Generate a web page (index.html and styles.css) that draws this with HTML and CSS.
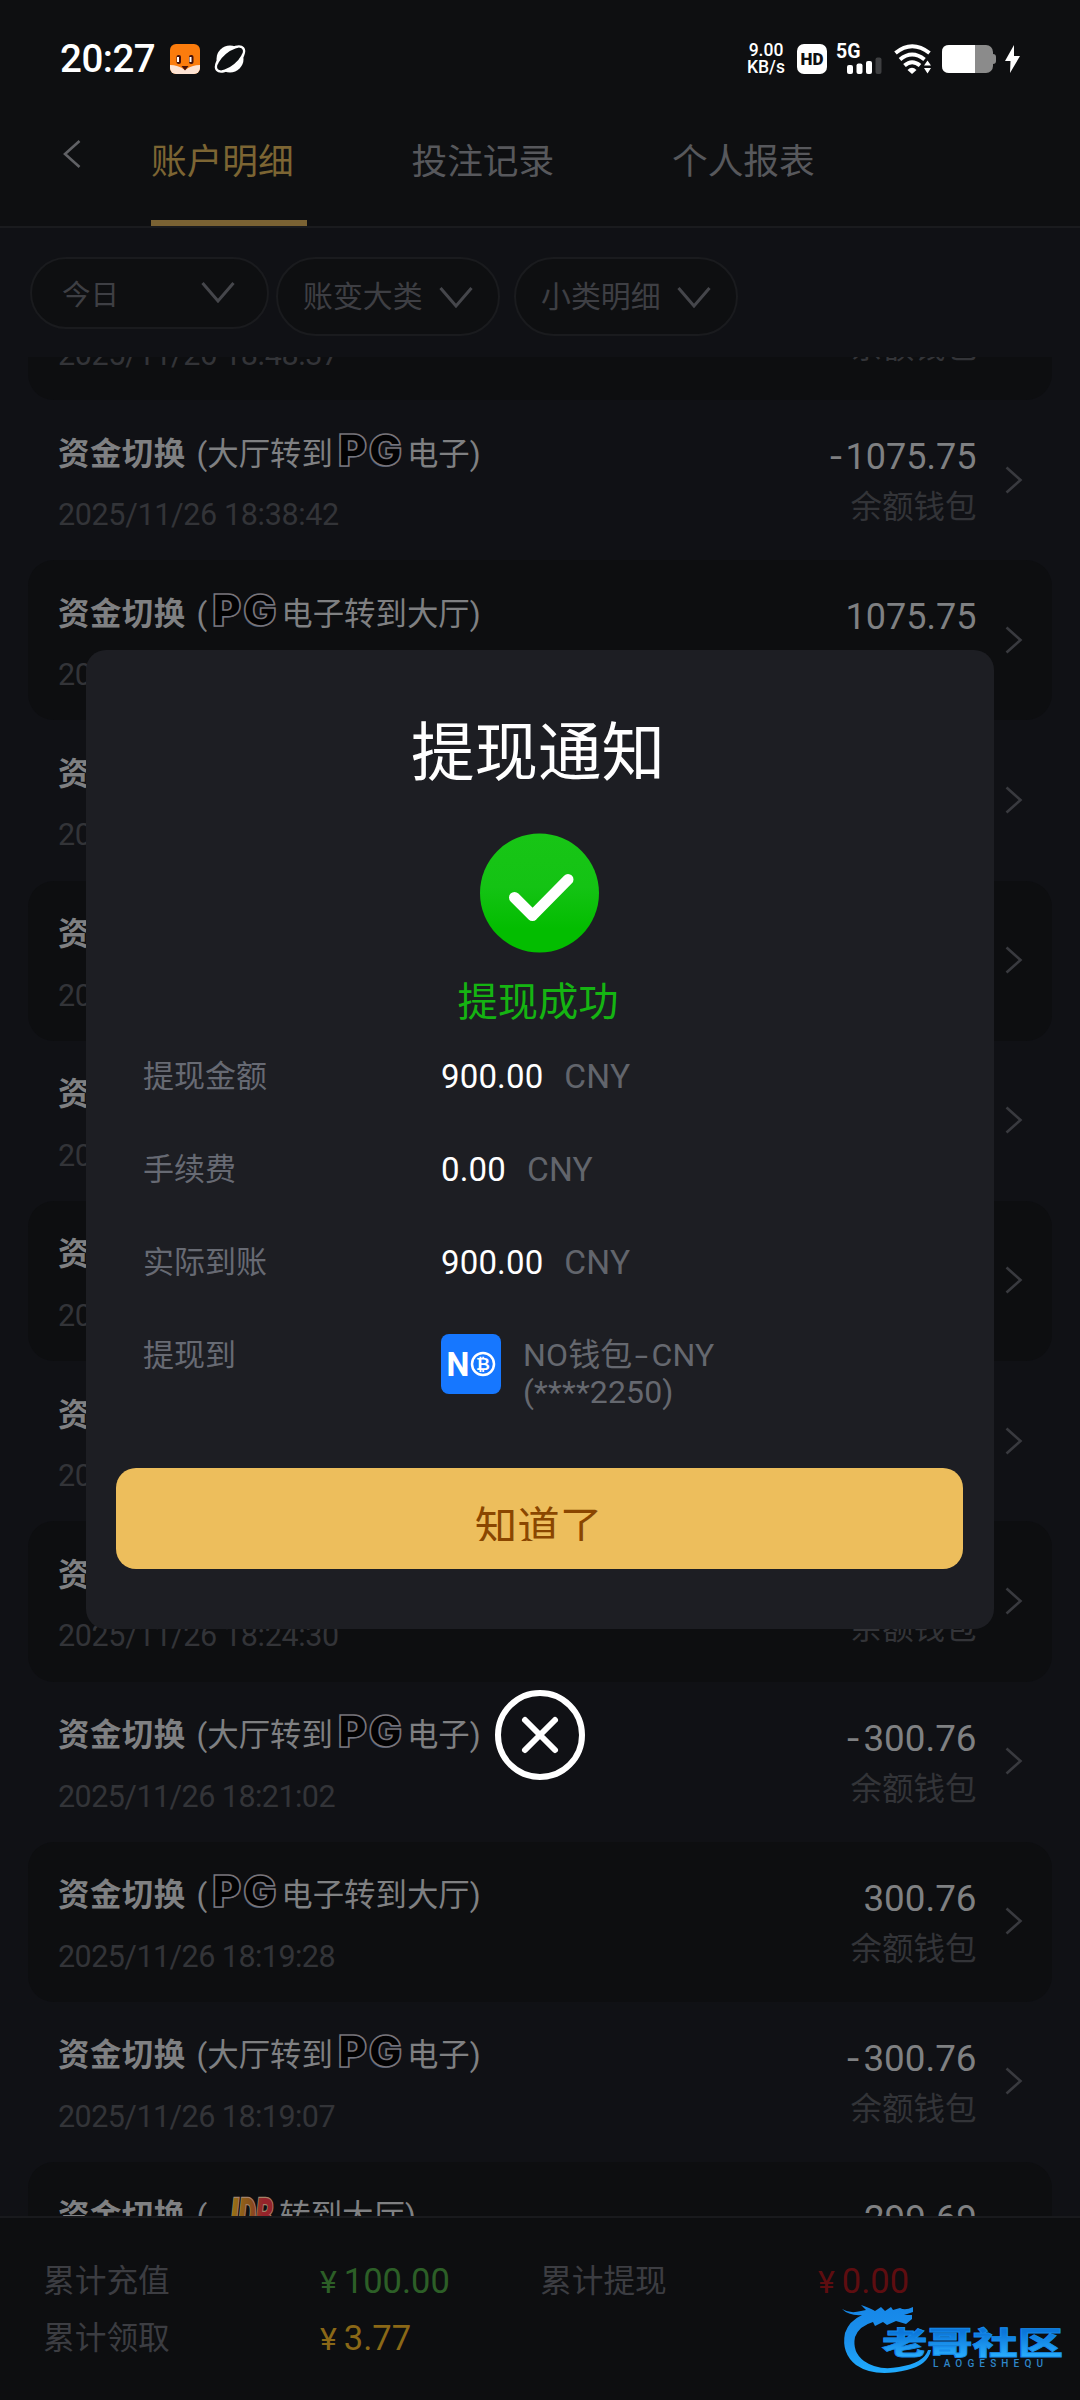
FILE: index.html
```html
<!DOCTYPE html>
<html lang="zh-CN">
<head>
<meta charset="utf-8">
<title>账户明细</title>
<link rel="stylesheet" href="styles.css">
</head>
<body>
<svg class="defs" width="0" height="0" aria-hidden="true">
  <symbol id="next" viewBox="0 0 18 28"><path d="M1.5 1.5 L15.5 14 L1.5 26.5"/></symbol>
  <symbol id="down" viewBox="0 0 34 22"><path d="M1.5 2 L17 20 L32.500 2"/></symbol>
</svg>
<div class="screen">
  <div class="status">
    <span class="clock">20:27</span>
    <svg class="fox" width="30" height="30" viewBox="0 0 30 30">
      <defs><clipPath id="foxclip"><rect width="30" height="30" rx="6"/></clipPath></defs>
      <g clip-path="url(#foxclip)">
        <rect width="30" height="30" fill="#fb7c0d"/>
        <path d="M0 21 Q8 21 15 26 Q22 21 30 21 V30 H0Z" fill="#fde3d3"/>
        <path d="M11.500 22 H18.500 L15 26.500Z" fill="#45120c"/>
        <rect x="6.500" y="11" width="4.500" height="9" rx="2" fill="#45120c"/><rect x="19" y="11" width="4.500" height="9" rx="2" fill="#45120c"/>
        <rect x="7" y="13" width="2" height="5" fill="#fff"/><rect x="19.500" y="13" width="2" height="5" fill="#fff"/>
      </g>
    </svg>
    <svg class="planet" width="32" height="30" viewBox="0 0 32 30">
      <circle cx="16" cy="15" r="13.500" fill="#fff"/>
      <ellipse cx="16" cy="15" rx="17" ry="8" transform="rotate(-40 16 15)" fill="none" stroke="#fff" stroke-width="2.500"/>
      <ellipse cx="16" cy="15" rx="15.500" ry="6.500" transform="rotate(-40 16 15)" fill="#0d0f11"/>
    </svg>
    <div class="status-right">
      <div class="speed"><span>9.00</span><span>KB/s</span></div>
      <div class="hd">HD</div>
      <div class="cell"><span class="g5">5G</span>
        <svg width="46" height="30" viewBox="0 0 46 30" fill="#fff"><rect x="10" y="21" width="6" height="9" rx="2"/><rect x="19.500" y="19.500" width="6" height="10.500" rx="2"/><rect x="29" y="17" width="6" height="13" rx="2"/><rect x="38.500" y="13.500" width="6" height="16.500" rx="2" fill="#3e3f41"/></svg>
      </div>
      <svg class="wifi" width="38" height="30" viewBox="0 0 38 30" fill="none" stroke="#fff" stroke-width="4">
        <path d="M1.500 9 Q18 -4.500 35.500 9"/><path d="M6 15.500 Q18 5.500 30.500 15.500"/><path d="M10.500 21.500 Q18 15 26 21.500"/>
        <path d="M13.500 26 Q18 21.500 22.500 26 L18 30Z" fill="#fff" stroke="none"/>
        <path d="M30 21.500 L33.500 16.500 L37 21.500Z M30 24 H37 L33.500 29.500Z" fill="#fff" stroke="none"/>
      </svg>
      <svg class="battery" width="55" height="28" viewBox="0 0 55 28">
        <path d="M50 9 H51 Q54 9 54 12 V16 Q54 19 51 19 H50Z" fill="#8b8b8b"/><rect width="51" height="28" rx="7" fill="#8b8b8b"/><path d="M7 0 H33 V28 H7 Q0 28 0 21 V7 Q0 0 7 0Z" fill="#fff"/>
      </svg>
      <svg class="bolt" width="15" height="28" viewBox="0 0 15 28"><path d="M9 0 L0 16 H5.500 L5 28 L15 11 H9Z" fill="#fff"/></svg>
    </div>
  </div>
  <nav class="tabs">
    <svg class="back" width="18" height="28" viewBox="0 0 18 28"><path d="M16.500 1 L2 14 L16.500 27"/></svg>
    <div class="tab active">账户明细</div>
    <div class="tab">投注记录</div>
    <div class="tab">个人报表</div>
  </nav>
  <div class="filters">
    <div class="pill first"><span>今日</span><svg width="34" height="22"><use href="#down"/></svg></div>
    <div class="pill"><span>账变大类</span><svg width="34" height="22"><use href="#down"/></svg></div>
    <div class="pill third"><span>小类明细</span><svg width="34" height="22"><use href="#down"/></svg></div>
  </div>
  <main class="list">
    <div class="rows">
      <div class="row"><div class="info"><div class="title"></div><div class="date">2025/11/26 18:48:37</div></div><div class="sum"><div class="wallet">余额钱包</div></div></div>
      <div class="row"><div class="info"><div class="title"><b>资金切换</b><span class="paren">(</span>大厅转到<i class="pg">PG</i>电子)</div><div class="date">2025/11/26 18:38:42</div></div><div class="sum"><div class="amount"><span class="minus">-</span>1075.75</div><div class="wallet">余额钱包</div></div><svg class="go" width="18" height="28"><use href="#next"/></svg></div>
      <div class="row"><div class="info"><div class="title"><b>资金切换</b><span class="paren">(</span><i class="pg">PG</i>电子转到大厅)</div><div class="date">20</div></div><div class="sum"><div class="amount">1075.75</div></div><svg class="go" width="18" height="28"><use href="#next"/></svg></div>
      <div class="row"><div class="info"><div class="title"><b>资</b></div><div class="date">20</div></div><svg class="go" width="18" height="28"><use href="#next"/></svg></div>
      <div class="row"><div class="info"><div class="title"><b>资</b></div><div class="date">20</div></div><svg class="go" width="18" height="28"><use href="#next"/></svg></div>
      <div class="row"><div class="info"><div class="title"><b>资</b></div><div class="date">20</div></div><svg class="go" width="18" height="28"><use href="#next"/></svg></div>
      <div class="row"><div class="info"><div class="title"><b>资</b></div><div class="date">20</div></div><svg class="go" width="18" height="28"><use href="#next"/></svg></div>
      <div class="row"><div class="info"><div class="title"><b>资</b></div><div class="date">20</div></div><svg class="go" width="18" height="28"><use href="#next"/></svg></div>
      <div class="row"><div class="info"><div class="title"><b>资</b></div><div class="date">2025/11/26 18:24:30</div></div><div class="sum"><div class="amount"></div><div class="wallet">余额钱包</div></div><svg class="go" width="18" height="28"><use href="#next"/></svg></div>
      <div class="row"><div class="info"><div class="title"><b>资金切换</b><span class="paren">(</span>大厅转到<i class="pg">PG</i>电子)</div><div class="date narrow">2025/11/26 18:21:02</div></div><div class="sum"><div class="amount wide"><span class="minus">-</span>300.76</div><div class="wallet">余额钱包</div></div><svg class="go" width="18" height="28"><use href="#next"/></svg></div>
      <div class="row"><div class="info"><div class="title"><b>资金切换</b><span class="paren">(</span><i class="pg">PG</i>电子转到大厅)</div><div class="date narrow">2025/11/26 18:19:28</div></div><div class="sum"><div class="amount wide">300.76</div><div class="wallet">余额钱包</div></div><svg class="go" width="18" height="28"><use href="#next"/></svg></div>
      <div class="row"><div class="info"><div class="title"><b>资金切换</b><span class="paren">(</span>大厅转到<i class="pg">PG</i>电子)</div><div class="date narrow">2025/11/26 18:19:07</div></div><div class="sum"><div class="amount wide"><span class="minus">-</span>300.76</div><div class="wallet">余额钱包</div></div><svg class="go" width="18" height="28"><use href="#next"/></svg></div>
      <div class="row"><div class="info"><div class="title"><b>资金切换</b><span class="paren">(</span><svg class="jdb" width="58" height="46" viewBox="0 0 58 46"><defs><linearGradient id="jdbfill"><stop offset="0" stop-color="#a08012"/><stop offset=".55" stop-color="#88511c"/><stop offset=".8" stop-color="#96232b"/></linearGradient></defs><text x="4" y="36" font-size="44" font-weight="900" font-style="italic" textLength="50" lengthAdjust="spacingAndGlyphs" fill="url(#jdbfill)" stroke="#a38268" stroke-width="2.500" paint-order="stroke">JDB</text></svg>转到大厅)</div></div><div class="sum"><div class="amount wide">299.69</div></div></div>
    </div>
  </main>
  <footer class="totals">
    <span>累计充值</span><span class="val green"><em>¥</em>100.00</span><span>累计提现</span><span class="val red"><em>¥</em>0.00</span>
    <span>累计领取</span><span class="val gold"><em>¥</em>3.77</span>
  </footer>

  <section class="dialog">
    <h1>提现通知</h1>
    <svg class="ok" width="120" height="120" viewBox="0 0 120 120">
      <defs><linearGradient id="okfill" x1="0" y1="0" x2="0" y2="1"><stop offset="0" stop-color="#18c516"/><stop offset=".45" stop-color="#14c314"/><stop offset=".8" stop-color="#03bd00"/><stop offset="1" stop-color="#03bd00"/></linearGradient></defs>
      <circle cx="59.500" cy="60" r="59.500" fill="url(#okfill)"/>
      <path d="M34.500 64.500 L52.500 82.500 L88 46.500" fill="none" stroke="#fff" stroke-width="11" stroke-linecap="round" stroke-linejoin="round"/>
    </svg>
    <p class="result">提现成功</p>
    <dl>
      <dt>提现金额</dt><dd>900.00<span>CNY</span></dd>
      <dt>手续费</dt><dd>0.00<span>CNY</span></dd>
      <dt>实际到账</dt><dd>900.00<span>CNY</span></dd>
      <dt>提现到</dt>
      <dd class="dest">
        <svg width="60" height="60" viewBox="0 0 60 60"><rect width="60" height="60" rx="8" fill="#1677ff"/><text x="5.500" y="42" font-size="33" font-weight="700" fill="#fff" textLength="23" lengthAdjust="spacingAndGlyphs">N</text><circle cx="42" cy="30" r="11" fill="none" stroke="#fff" stroke-width="2.500"/><text x="42" y="36" text-anchor="middle" class="coin" font-size="17" font-weight="700" fill="#fff">₿</text></svg>
        <p><span>NO钱包</span><span class="dash">-</span><span>CNY</span><br>(****2250)</p>
      </dd>
    </dl>
    <button><span>知道了</span></button>
  </section>
  <svg class="close" width="92" height="92" viewBox="0 0 92 92" fill="none" stroke="#fff"><circle cx="46" cy="46" r="42" stroke-width="6"/><path d="M31 31 L61 61 M61 31 L31 61" stroke-width="6" stroke-linecap="round"/></svg>
  <svg class="mark" width="250" height="100" viewBox="0 0 250 100">
    <defs><linearGradient id="blue" gradientUnits="userSpaceOnUse" x1="0" y1="15" x2="0" y2="85"><stop offset="0" stop-color="#1687e8"/><stop offset=".5" stop-color="#1b90ec"/><stop offset="1" stop-color="#20adff"/></linearGradient><linearGradient id="blue2" x1="0" y1="0" x2="0" y2="1"><stop offset=".2" stop-color="#0b76da"/><stop offset=".9" stop-color="#2bb1ff"/></linearGradient></defs>
    <g fill="url(#blue)">
      <path d="M12 19 Q20 24 31 21 L36 20 L31 15 Q40 18 45 21 L51 17 L55 21 L61 17 L63 20 L70 18 Q75 21 83 17 L83 22 L74 25 L82 25 L82 29 L76 34 L66 31 L57 35 L53 32 L45 36 L43 32 Q29 36 25 47 Q22 62 34 71 Q48 81 69 77 Q94 73 98 60 L101 60 Q98 75 77 80 Q45 88 26 75 Q11 63 15 43 Q19 31 32 25 Q19 26 12 19Z"/>
    </g>
    <text x="52" y="64" font-size="31" font-weight="900" textLength="181" lengthAdjust="spacingAndGlyphs" fill="url(#blue2)" stroke="#168bea" stroke-width=".8">老哥社区</text>
    <text x="103" y="77" font-size="10" font-weight="500" textLength="110" fill="#2f86c8">LAOGESHEQU</text>
  </svg>
</div>
</body>
</html>
```
FILE: styles.css
```css
* { box-sizing: border-box; }
body { margin: 0; background: #101115; font-family: Roboto, "Noto Sans CJK SC", sans-serif; }
.defs { position: absolute; }
.screen { position: relative; width: 1080px; height: 2400px; overflow: hidden; display: flex; flex-direction: column; }

.status { height: 116px; padding: 2px 60px 0 60px; display: flex; align-items: center; background: #0e0f11; color: #fff; }
.clock { width: 110px; font-size: 38.5px; line-height: 40px; font-weight: 500; letter-spacing: -.5px; }
.planet { margin-left: 14px; }
.status-right { margin-left: auto; display: flex; align-items: center; }
.speed { width: 38px; display: flex; flex-direction: column; font-size: 17.5px; line-height: 17px; font-weight: 500; text-align: center; }
.hd { width: 30px; height: 30px; margin-left: 12px; border-radius: 7px; background: #fff; color: #0e0f11; font-size: 17px; font-weight: 900; line-height: 31px; text-align: center; }
.cell { position: relative; margin-left: 10px; height: 30px; }
.cell svg { display: block; }
.g5 { position: absolute; left: -1px; top: -1px; font-size: 19.5px; line-height: 18px; font-weight: 700; }
.wifi { margin-left: 11px; }
.battery { margin-left: 10px; }
.bolt { margin-left: 8px; }

.tabs { height: 112px; display: flex; background: #0e0f11; border-bottom: 2px solid #1a1b1e; }
.back { margin: 24px 70px 0 63px; fill: none; stroke: #606165; stroke-width: 2.6; }
.tab { width: 156px; height: 110px; margin-right: 104.5px; padding-top: 20.5px; font-size: 35.7px; line-height: 50px; color: #57585c; white-space: nowrap; }
.tab.active { color: #7c6533; border-bottom: 6px solid #7a6233; }

.filters { height: 129px; padding: 29px 0 0 30px; display: flex; align-items: flex-start; }
.pill { display: flex; align-items: center; justify-content: space-between; width: 224px; height: 79px; padding: 0 25px; border: 2px solid #1a1b1e; border-radius: 40px; background: #0e0f11; color: #3e3f44; font-size: 29.9px; line-height: 40px; white-space: nowrap; }
.pill span { margin-top: 1px; }
.pill svg { fill: none; stroke: #45464b; stroke-width: 3; }
.pill.first { width: 239px; height: 72px; margin-right: 7px; padding: 0 32px 0 30px; font-size: 28.5px; }
.pill.first span { margin-top: 5px; }
.pill.first svg { margin-top: -2px; }
.pill.third { margin-left: 14px; }

.list { height: 1859px; overflow: hidden; padding: 0 28px; }
.rows { margin-top: -117.2px; }
.row { display: flex; height: 160.2px; padding: 0 29px 0 30px; border-radius: 26px; color: #7f8082; }
.row:nth-child(odd) { background: #0d0e10; }
.info { flex: 1; padding-top: 34.5px; }
.title { display: flex; align-items: center; height: 40px; font-size: 31.4px; line-height: 40px; white-space: nowrap; }
.title b { font-weight: 700; letter-spacing: .5px; }
.paren { margin-left: 11px; }
.pg { width: 68px; margin: -10px 1px 0 5px; font: 900 44px/34px Inter, sans-serif; letter-spacing: 2px; color: #020203; -webkit-text-stroke: 1.6px #77747a; text-shadow: -.7px .7px #263e60, .7px 0 #603038; }
.jdb { flex: none; margin: 0 2px 0 12px; }
.date { margin-top: 22.5px; font-size: 30.5px; line-height: 36px; letter-spacing: -.35px; color: #333438; white-space: nowrap; }
.date.narrow { letter-spacing: -.55px; }
.sum { padding-top: 35px; text-align: right; }
.row:first-child .sum { padding-top: 88px; }
.amount { height: 44px; font-size: 36px; line-height: 44px; }
.amount.wide { font-size: 36.8px; }
.minus { display: inline-block; transform: scaleX(1.2); margin-right: 5px; }
.wallet { margin-top: 9px; font-size: 31.5px; line-height: 40px; color: #333438; }
.row:first-child .wallet { margin-top: 0; }
.go { margin: 65.500px 0 0 28.5px; fill: none; stroke: #393a3f; stroke-width: 2.6; }
.row:last-child .sum { margin-right: 46px; }
.row:first-child .sum { margin-right: 46px; }

.totals { flex: 1; display: grid; grid-template-columns: 277px 220px 278px 1fr; grid-template-rows: 57px 56px; padding: 36px 0 0 43px; background: #0d0e10; border-top: 2px solid #191a1d; color: #3c3d42; font-size: 31.7px; line-height: 56px; }
.val { font-size: 34.5px; line-height: 54px; }
.val em { font-style: normal; font-size: 32px; display: inline-block; margin-right: 7px; }
.green { color: #2c5f27; } .red { color: #5e0d10; } .gold { color: #8a6817; }

.dialog { position: absolute; left: 86px; top: 650px; width: 908px; height: 979px; padding: 62px 31px 0 30px; border-radius: 20px; background: #1d1e23; display: flex; flex-direction: column; align-items: center; }
.dialog h1 { margin: 0 3px 0 0; font-size: 63.5px; line-height: 84px; font-weight: 400; color: #fff; }
.ok { margin-top: 37px; }
.result { margin: 23px 3px 0 0; font-size: 40.3px; line-height: 54px; color: #15b412; }
dl { align-self: stretch; display: grid; grid-template-columns: 298px 1fr; grid-template-rows: repeat(3, 93px) 1fr; margin: 26.5px 0 0 27px; height: 411px; font-size: 31px; line-height: 40px; color: #676a73; }
dd { margin: 0; font-size: 33px; color: #fff; letter-spacing: .15px; }
dd span { margin-left: 21px; font-size: 33.500px; color: #62656c; }
.dest { display: flex; }
.dest svg { margin: -1.5px 22px 0 0; flex: none; }
.coin { font-family: "DejaVu Sans", sans-serif; }
.dest p { margin: 1px 0 0; font-size: 32px; line-height: 37px; color: #65686f; }
.dest p span { margin: 0; font-size: 32px; color: inherit; }
.dest p .dash { display: inline-block; transform: scaleX(1.5); margin: 0 5px; }
.dialog button { align-self: stretch; height: 101px; margin: 0; padding: 33px 2px 0 0; border: 0; border-radius: 20px; background: #edbe5c; color: #8a4600; font: 42.5px/46px "Noto Sans CJK SC", sans-serif; display: flex; justify-content: center; align-items: flex-start; }
.dialog button span { height: 40px; overflow: hidden; }
.close { position: absolute; left: 494px; top: 1688.5px; }
.mark { position: absolute; left: 830px; top: 2290px; }
```
